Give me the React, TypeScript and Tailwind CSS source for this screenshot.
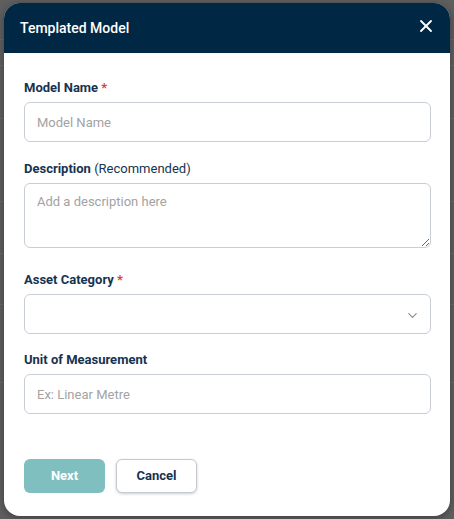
import { ChevronDown, X } from "lucide-react";

const inputCls =
  "block w-full h-[40px] px-[12px] bg-white border border-[#c9cdd4] rounded-[6px] text-[13px] text-[#333] placeholder:text-[#a3a3a3] focus:outline-none";

function Label({ text, required, note }: { text: string; required?: boolean; note?: string }) {
  return (
    <label className="block h-[18px] leading-[18px] mb-[5px] text-[13px] font-bold text-[#163350]">
      {text}
      {note && <span className="font-normal"> {note}</span>}
      {required && <span className="text-[#e53935]"> *</span>}
    </label>
  );
}

export default function App() {
  return (
    <div
      className="relative w-[454px] h-[519px] overflow-hidden bg-[#5f5f5f] pt-[3px] pl-[4px]"
      style={{ fontFamily: "Roboto, 'Liberation Sans', sans-serif" }}
    >
      {/* backdrop table lines */}
      <div className="absolute inset-0 flex flex-col">
        <div className="h-[40px] border-b border-[#6a6a6a]" />
        <div className="h-[26px] border-b border-[#6a6a6a]" />
        <div className="h-[53px] border-b border-[#6a6a6a]" />
        <div className="h-[83px] border-b border-[#6a6a6a]" />
        <div className="h-[52px] border-b border-[#6a6a6a]" />
        <div className="h-[51px] border-b border-[#6a6a6a]" />
        <div className="h-[78px] border-b border-[#6a6a6a]" />
      </div>

      <div className="relative w-[446px] h-[513px] bg-white rounded-[16px] shadow-[0_2px_8px_rgba(0,0,0,0.35)] flex flex-col">
        <div className="h-[50px] shrink-0 bg-[#002845] rounded-t-[16px] pl-[16px] pr-[14px] flex items-center justify-between">
          <span className="text-[14px] font-medium text-white">Templated Model</span>
          <X className="w-[20px] h-[20px] text-white -mt-[5px]" strokeWidth={2.2} />
        </div>

        <div className="pl-[20px] pr-[19px] pt-[26px] flex flex-col">
          <Label text="Model Name" required />
          <input className={inputCls} placeholder="Model Name" />

          <div className="mt-[18px]">
            <Label text="Description" note="(Recommended)" />
            <textarea
              className="block w-full h-[65px] px-[12px] py-[10px] bg-white border border-[#c9cdd4] rounded-[6px] text-[13px] text-[#333] placeholder:text-[#a3a3a3] focus:outline-none leading-[16px]"
              placeholder="Add a description here"
            />
          </div>

          <div className="mt-[23px]">
            <Label text="Asset Category" required />
            <div className="h-[40px] bg-white border border-[#c9cdd4] rounded-[6px] flex items-center justify-end pr-[10px]">
              <ChevronDown className="w-[15px] h-[15px] text-[#8a8a8a] mt-[2px]" strokeWidth={1.8} />
            </div>
          </div>

          <div className="mt-[17px]">
            <Label text="Unit of Measurement" />
            <input className={inputCls} placeholder="Ex: Linear Metre" />
          </div>

          <div className="mt-[45px] flex gap-[11px]">
            <button className="w-[81px] h-[34px] rounded-[6px] bg-[#80bfbf] text-white text-[13px] font-bold">
              Next
            </button>
            <button className="w-[81px] h-[34px] rounded-[6px] bg-white border border-[#c5c9d0] text-[#163350] text-[13px] font-bold shadow-[0_1px_3px_rgba(0,0,0,0.2)]">
              Cancel
            </button>
          </div>
        </div>
      </div>
    </div>
  );
}
